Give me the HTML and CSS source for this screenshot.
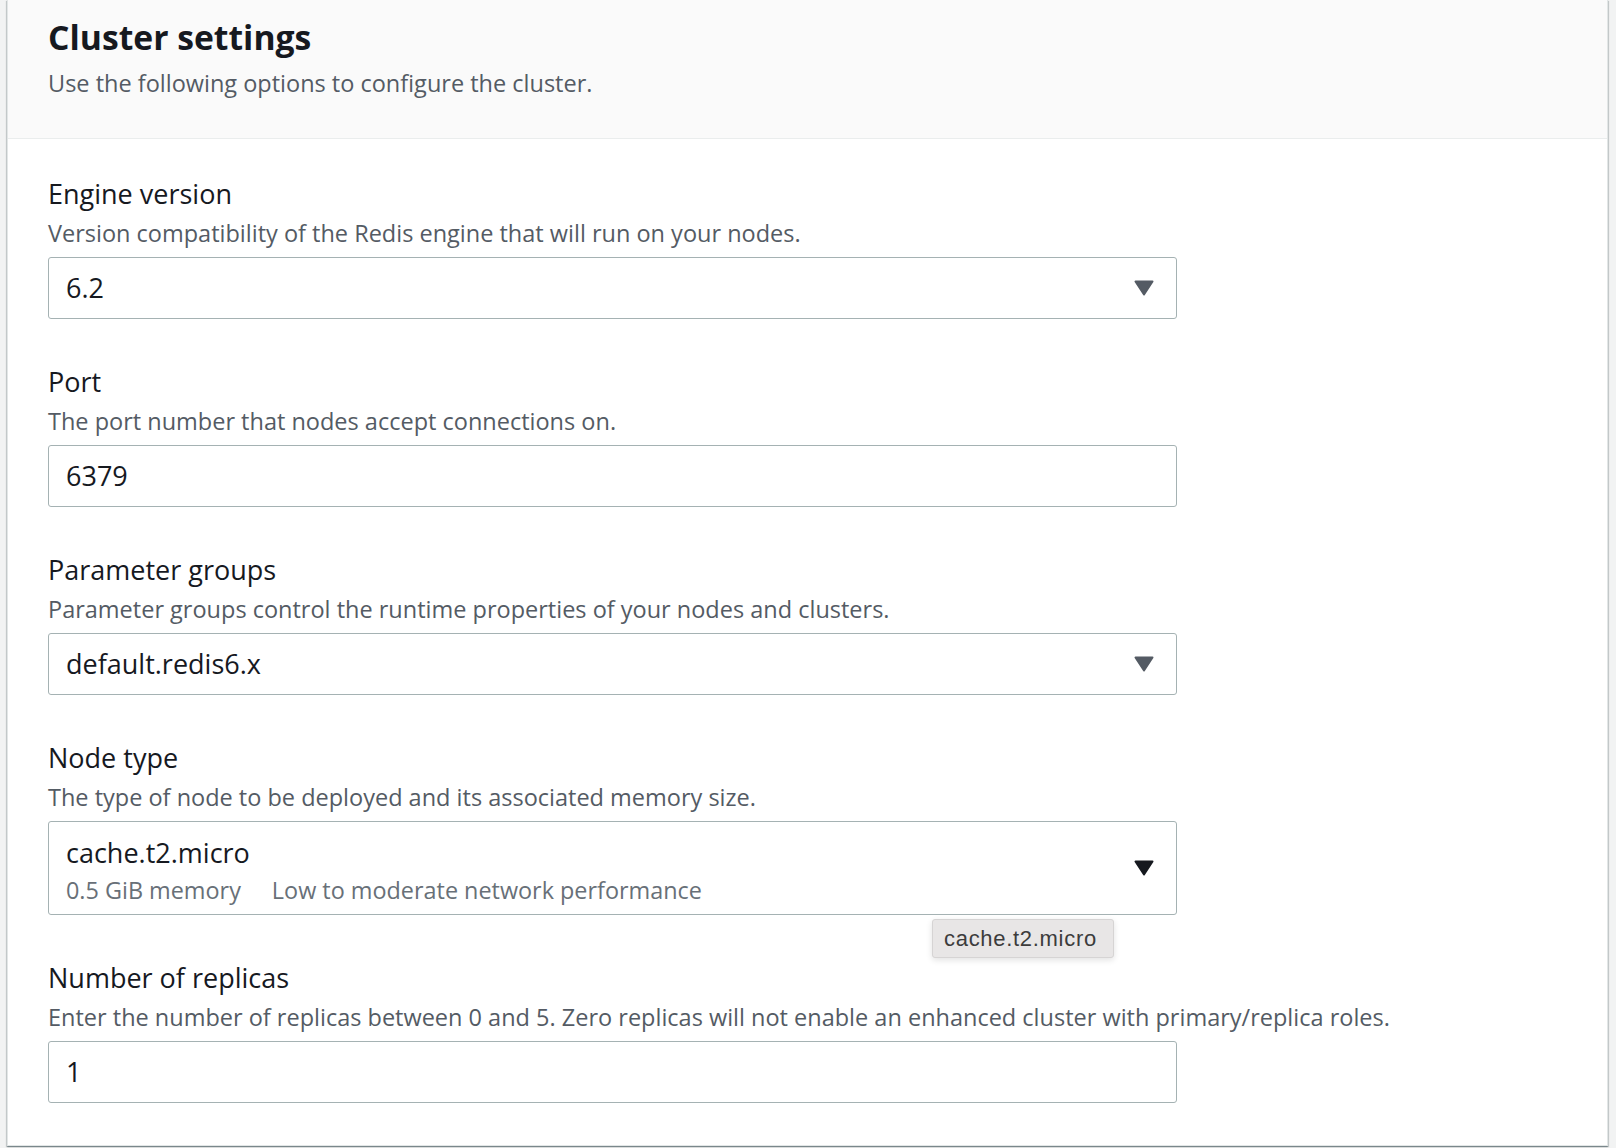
FILE: index.html
```html
<!DOCTYPE html>
<html lang="en">
<head>
<meta charset="utf-8">
<title>Cluster settings</title>
<link rel="stylesheet" href="styles.css">
</head>
<body>
<div class="container">
  <div class="header">
    <h2 class="title">Cluster settings</h2>
    <p class="subtitle">Use the following options to configure the cluster.</p>
  </div>
  <div class="content">
    <div class="field">
      <div class="label">Engine version</div>
      <div class="desc">Version compatibility of the Redis engine that will run on your nodes.</div>
      <div class="select">
        <span class="value">6.2</span>
        <svg class="caret" viewBox="0 0 20 16" width="20" height="16"><path d="M1.5 1.5 H18.5 L10 14.5 Z" fill="currentColor" stroke="currentColor" stroke-width="2" stroke-linejoin="round"/></svg>
      </div>
    </div>
    <div class="field">
      <div class="label">Port</div>
      <div class="desc">The port number that nodes accept connections on.</div>
      <div class="input"><span class="value">6379</span></div>
    </div>
    <div class="field">
      <div class="label">Parameter groups</div>
      <div class="desc">Parameter groups control the runtime properties of your nodes and clusters.</div>
      <div class="select">
        <span class="value">default.redis6.x</span>
        <svg class="caret" viewBox="0 0 20 16" width="20" height="16"><path d="M1.5 1.5 H18.5 L10 14.5 Z" fill="currentColor" stroke="currentColor" stroke-width="2" stroke-linejoin="round"/></svg>
      </div>
    </div>
    <div class="field">
      <div class="label">Node type</div>
      <div class="desc">The type of node to be deployed and its associated memory size.</div>
      <div class="select select-tall">
        <div class="option">
          <div class="value">cache.t2.micro</div>
          <div class="tags"><span>0.5 GiB memory</span><span>Low to moderate network performance</span></div>
        </div>
        <svg class="caret caret-dark" viewBox="0 0 20 16" width="20" height="16"><path d="M1.5 1.5 H18.5 L10 14.5 Z" fill="currentColor" stroke="currentColor" stroke-width="2" stroke-linejoin="round"/></svg>
        <div class="tooltip">cache.t2.micro</div>
      </div>
    </div>
    <div class="field">
      <div class="label">Number of replicas</div>
      <div class="desc">Enter the number of replicas between 0 and 5. Zero replicas will not enable an enhanced cluster with primary/replica roles.</div>
      <div class="input"><span class="value">1</span></div>
    </div>
  </div>
</div>
</body>
</html>
```
FILE: styles.css
```css
html, body {
  margin: 0;
  padding: 0;
}
body {
  background: #f2f3f3;
  font-family: "Open Sans", Roboto, "Liberation Sans", sans-serif;
  color: #16191f;
  height: 1148px;
  overflow: hidden;
}
.container {
  box-sizing: border-box;
  margin-left: 7px;
  width: 1601px;
  background: #ffffff;
  border: 1px solid #e2e6e6;
  border-top: none;
  box-shadow: 0 1px 1px 0 rgba(0, 28, 36, 0.3), 1px 1px 1px 0 rgba(0, 28, 36, 0.15), -1px 1px 1px 0 rgba(0, 28, 36, 0.15);
}
.header {
  background: #fafafa;
  border-bottom: 1px solid #eaeded;
  padding: 17px 40px 40px 40px;
}
.title {
  margin: 0;
  font-size: 33.7px;
  line-height: 40px;
  font-weight: 700;
  color: #16191f;
}
.subtitle {
  margin: 11px 0 0 0;
  font-size: 23.5px;
  line-height: 30px;
  color: #545b64;
}
.content {
  padding: 39px 40px 42px 40px;
  display: flex;
  flex-direction: column;
  gap: 47px;
}
.field {
  display: flex;
  flex-direction: column;
}
.label {
  font-size: 27px;
  line-height: 32px;
  color: #16191f;
}
.desc {
  margin-top: 8px;
  font-size: 23.5px;
  line-height: 30px;
  color: #545b64;
}
.select, .input {
  position: relative;
  box-sizing: border-box;
  margin-top: 9px;
  width: 1129px;
  height: 62px;
  border: 1px solid #a5b2b3;
  border-radius: 3px;
  display: flex;
  align-items: center;
  padding: 0 22px 0 17px;
  background: #fff;
}
.select {
  justify-content: space-between;
}
.value {
  font-size: 27px;
  line-height: 32px;
  color: #16191f;
}
.caret {
  color: #545b64;
  flex: none;
}
.caret-dark {
  color: #16191f;
}
.select-tall {
  height: 94px;
}
.option {
  display: flex;
  flex-direction: column;
  gap: 6px;
  padding-top: 6px;
}
.tags {
  display: flex;
  gap: 31px;
  font-size: 23.4px;
  line-height: 30px;
  color: #687078;
}
.tooltip {
  position: absolute;
  left: 883px;
  top: 97px;
  box-sizing: border-box;
  width: 182px;
  height: 39px;
  padding: 0 11px;
  background: #e8e6e6;
  border: 1px solid #d6d4d4;
  border-radius: 3px;
  box-shadow: 0 2px 6px rgba(0, 0, 0, 0.12);
  font-family: "Liberation Sans", Arial, sans-serif;
  font-size: 22px;
  letter-spacing: 0.7px;
  line-height: 37px;
  color: #3c3c3c;
  white-space: nowrap;
}
```
